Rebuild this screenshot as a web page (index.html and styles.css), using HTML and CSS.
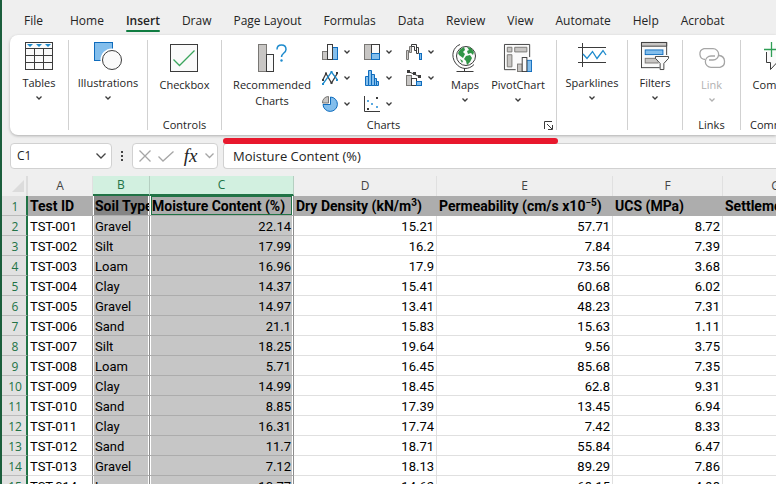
FILE: index.html
```html
<!DOCTYPE html>
<html lang="en">
<head>
<meta charset="utf-8">
<title>Workbook</title>
<link rel="stylesheet" href="styles.css">
</head>
<body>
<div class="app">
  <nav class="tabs">
    <button class="tab tab-file">File</button>
    <button class="tab">Home</button>
    <button class="tab active">Insert</button>
    <button class="tab">Draw</button>
    <button class="tab">Page Layout</button>
    <button class="tab">Formulas</button>
    <button class="tab">Data</button>
    <button class="tab">Review</button>
    <button class="tab">View</button>
    <button class="tab">Automate</button>
    <button class="tab">Help</button>
    <button class="tab">Acrobat</button>
  </nav>

  <section class="ribbon">
    <div class="group g-tables">
      <button class="tile">
        <svg class="icon" width="28" height="28" viewBox="0 0 28 28" fill="none" stroke="#3b3b3b"><rect x=".5" y=".5" width="27" height="27" fill="#fafafa"/><path d="M0 6.500H28M0 13.500H28M0 20.500H28M9.500 6V28M18.500 6V28"/><path d="M2 2h6L5 5zM11 2h6l-3 3zM20 2h6l-3 3z" fill="#1e8bcd" stroke="none"/></svg>
        <span>Tables</span>
        <svg class="chev" width="6" height="4" viewBox="0 0 6 4"><path d="M.5 .5 3 3 5.500 .5"/></svg>
      </button>
    </div>
    <div class="group g-illus">
      <button class="tile">
        <svg class="icon" width="28" height="28" viewBox="0 0 28 28" fill="none"><rect x=".5" y=".5" width="18" height="18" fill="#83beec" stroke="#0f6cbd"/><circle cx="18" cy="18" r="11.500" fill="#fff"/><circle cx="18" cy="18" r="9.500" fill="#fafafa" stroke="#3b3b3b"/></svg>
        <span>Illustrations</span>
        <svg class="chev" width="6" height="4" viewBox="0 0 6 4"><path d="M.5 .5 3 3 5.500 .5"/></svg>
      </button>
    </div>
    <div class="group g-controls low">
      <button class="tile">
        <svg class="icon" width="28" height="28" viewBox="0 0 28 28" fill="none"><rect x=".5" y=".5" width="27" height="27" fill="#fafafa" stroke="#3b3b3b"/><path d="M3.500 15.500 9.500 21.500 24.500 6.500" stroke="#3ba55d" stroke-width="1.300"/></svg>
        <span>Checkbox</span>
      </button>
      <span class="group-name">Controls</span>
    </div>
    <div class="group g-charts low">
      <div class="charts-row">
        <button class="tile rec">
          <svg class="icon" width="28" height="28" viewBox="0 0 28 28" fill="none"><rect x=".5" y=".5" width="8" height="27" fill="#c8c6c4" stroke="#797774"/><rect x="8.500" y="10.500" width="7" height="17" fill="#fafafa" stroke="#3b3b3b"/><path d="M19 5.500C19 2.500 21 1 23.500 1S28 2.600 28 5.500C28 9 23.500 9 23.500 13" stroke="#1e8bcd" stroke-width="1.500"/><circle cx="23.500" cy="16.500" r="1.200" fill="#1e8bcd"/></svg>
          <span>Recommended<br>Charts</span>
        </button>
        <div class="minis">
          <button class="mini" aria-label="Column chart"><svg width="16" height="16" viewBox="0 0 16 16"><rect x=".5" y="7.500" width="5" height="8" fill="#c8c6c4" stroke="#797774"/><rect x="10.500" y="3.500" width="5" height="12" fill="#83beec" stroke="#0f6cbd"/><rect x="5.500" y=".5" width="5" height="15" fill="#fafafa" stroke="#3b3b3b"/></svg><svg class="chev" width="6" height="4" viewBox="0 0 6 4"><path d="M.5 .5 3 3 5.500 .5"/></svg></button>
          <button class="mini" aria-label="Hierarchy chart"><svg width="16" height="16" viewBox="0 0 16 16"><rect x=".5" y=".5" width="7" height="15" fill="#c8c6c4" stroke="#797774"/><rect x="7.500" y=".5" width="8" height="9" fill="#fafafa" stroke="#3b3b3b"/><rect x="7.500" y="9.500" width="8" height="6" fill="#83beec" stroke="#0f6cbd"/></svg><svg class="chev" width="6" height="4" viewBox="0 0 6 4"><path d="M.5 .5 3 3 5.500 .5"/></svg></button>
          <button class="mini" aria-label="Waterfall chart"><svg width="16" height="16" viewBox="0 0 16 16"><path d="M.5 6.500h2v9h-2zM3.500 2.500h2v6h-2z" fill="#c8c6c4" stroke="#797774"/><path d="M5.500 .5h5v6h-2v-4h-3zM10.500 3.500h2v6h-2z" fill="#fafafa" stroke="#3b3b3b"/><rect x="13.500" y="9.500" width="2" height="6" fill="#83beec" stroke="#0f6cbd"/></svg><svg class="chev" width="6" height="4" viewBox="0 0 6 4"><path d="M.5 .5 3 3 5.500 .5"/></svg></button>
          <button class="mini" aria-label="Line chart"><svg width="16" height="16" viewBox="0 0 16 16" fill="none" stroke-width="1.300"><path d="M.5 10.500 4 3.500 9.500 13 15.500 3" stroke="#3b3b3b"/><path d="M.5 14.500 9.500 2 15.500 10" stroke="#1e8bcd"/><path d="M3 2.500h2v2H3zM8.500 12h2v2h-2zM14 2h2v2h-2zM0 9h2v2H0z" fill="#3b3b3b"/><path d="M0 13h2v2H0zM8.500 1h2v2h-2zM14 9h2v2h-2z" fill="#1e8bcd"/></svg><svg class="chev" width="6" height="4" viewBox="0 0 6 4"><path d="M.5 .5 3 3 5.500 .5"/></svg></button>
          <button class="mini" aria-label="Histogram"><svg width="16" height="16" viewBox="0 0 16 16" fill="#83beec" stroke="#0f6cbd"><path d="M1.500 6.500h3v9h-3zM4.500 .5h3v15h-3zM7.500 4.500h3v11h-3zM10.500 8.500h2v7h-2zM12.500 11.500h2v4h-2z"/></svg><svg class="chev" width="6" height="4" viewBox="0 0 6 4"><path d="M.5 .5 3 3 5.500 .5"/></svg></button>
          <button class="mini" aria-label="Combo chart"><svg width="16" height="16" viewBox="0 0 16 16"><rect x=".5" y="5.500" width="5" height="10" fill="#c8c6c4" stroke="#797774"/><rect x="5.500" y="8.500" width="5" height="7" fill="#fafafa" stroke="#3b3b3b"/><rect x="10.500" y="11.500" width="5" height="4" fill="#83beec" stroke="#0f6cbd"/><path d="M2 1.500 8 4 14 7" stroke="#3b3b3b" fill="none"/><path d="M1 0h3v3H1zM7 2h3v3H7zM12 5h3v3h-3z" fill="#3b3b3b"/></svg><svg class="chev" width="6" height="4" viewBox="0 0 6 4"><path d="M.5 .5 3 3 5.500 .5"/></svg></button>
          <button class="mini" aria-label="Pie chart"><svg width="16" height="16" viewBox="0 0 16 16"><path d="M8.500 1A7.200 7.200 0 1 1 1 8.500H8.500z" fill="#83beec" stroke="#0f6cbd"/><path d="M6.500 .5A6 6 0 0 0 .5 7H6.500z" fill="#c8c6c4" stroke="#797774"/></svg><svg class="chev" width="6" height="4" viewBox="0 0 6 4"><path d="M.5 .5 3 3 5.500 .5"/></svg></button>
          <button class="mini" aria-label="Scatter chart"><svg width="16" height="16" viewBox="0 0 16 16"><path d="M.5 0V15.500H16" fill="none" stroke="#3b3b3b"/><path d="M12 1h2v2h-2zM3 12h2v2H3z" fill="#3b3b3b"/><path d="M3 4h2v2H3zM7 7h2v2H7zM12 10h2v2h-2z" fill="#5aa9e0"/></svg><svg class="chev" width="6" height="4" viewBox="0 0 6 4"><path d="M.5 .5 3 3 5.500 .5"/></svg></button>
        </div>
        <button class="tile maps">
          <svg class="icon" width="26" height="28" viewBox="0 0 26 28" fill="none"><circle cx="14" cy="12" r="9.500" fill="#fafafa" stroke="#3b3b3b"/><path d="M8 5.500 12 3l1 3-2 2 2 2-2 4-4-3-1-2zM15 3l4 1 3 4-1 3-2-2-3 1-1-3 2-1zM14 12l4-1 2 3-2 4-3 3-1-4-2-2zM8 15l3 2-1 2z" fill="#2f9445"/><path d="M8 0.500C1 3 -1.500 12 3.500 19S17 26 22 20.500M12.500 24v3.500M4.500 27.500h17" stroke="#3b3b3b"/></svg>
          <span>Maps</span>
          <svg class="chev" width="6" height="4" viewBox="0 0 6 4"><path d="M.5 .5 3 3 5.500 .5"/></svg>
        </button>
        <button class="tile pivot">
          <svg class="icon" width="30" height="30" viewBox="0 0 30 30"><path d="M12.500 27.500H.5V.5H27.500V14" fill="#fafafa" stroke="#3b3b3b"/><path d="M3.500 3.500h5v5h-5zM11.500 3.500h13v5h-13zM3.500 11.500h5v13h-5z" fill="#c8c6c4" stroke="#797774"/><rect x="14.500" y="21.500" width="5" height="8" fill="#c8c6c4" stroke="#797774"/><rect x="24.500" y="17.500" width="5" height="12" fill="#83beec" stroke="#0f6cbd"/><rect x="19.500" y="14.500" width="5" height="15" fill="#fafafa" stroke="#3b3b3b"/></svg>
          <span>PivotChart</span>
          <svg class="chev" width="6" height="4" viewBox="0 0 6 4"><path d="M.5 .5 3 3 5.500 .5"/></svg>
        </button>
      </div>
      <div class="group-foot"><span></span><span class="group-name">Charts</span>
        <button class="launch" aria-label="Chart options"><svg width="9" height="9" viewBox="0 0 9 9" fill="none" stroke="#3b3b3b"><path d="M.5 8V.5H8M3 3l5 5M8.500 4v4.500H4"/></svg></button>
      </div>
    </div>
    <div class="group g-spark">
      <button class="tile">
        <svg class="icon" width="28" height="28" viewBox="0 0 28 28" fill="none"><path d="M0 5.500H28M0 20.500H28M4.500 1V25" stroke="#3b3b3b"/><path d="M5 12 9 16.500 14.500 9.500 19 16.500 25 8.500 28 13" stroke="#1e8bcd" stroke-width="1.300"/></svg>
        <span>Sparklines</span>
        <svg class="chev" width="6" height="4" viewBox="0 0 6 4"><path d="M.5 .5 3 3 5.500 .5"/></svg>
      </button>
    </div>
    <div class="group g-filters">
      <button class="tile">
        <svg class="icon" width="30" height="30" viewBox="0 0 30 30"><rect x=".5" y=".5" width="27" height="27" fill="#fafafa" stroke="#3b3b3b"/><path d="M.5 .5h27v4H.5z" fill="#c8c6c4" stroke="#3b3b3b"/><rect x="4.500" y="8.500" width="19" height="5" fill="#83beec" stroke="#0f6cbd"/><rect x="4.500" y="17.500" width="14" height="5" fill="#c8c6c4" stroke="#797774"/><path d="M14 14H31V30H20V24z" fill="#fff"/><path d="M15.500 15.500h14v2L24.500 23v6.500h-4V23L15.500 17.500z" fill="#fafafa" stroke="#3b3b3b"/></svg>
        <span>Filters</span>
        <svg class="chev" width="6" height="4" viewBox="0 0 6 4"><path d="M.5 .5 3 3 5.500 .5"/></svg>
      </button>
    </div>
    <div class="group g-links low">
      <button class="tile disabled" disabled>
        <svg class="icon" width="28" height="28" viewBox="0 0 28 28" fill="none" stroke="#a6a6a6" stroke-width="1.300"><path d="M7 15.500A5.500 5.500 0 0 1 6 4.700h9A5.500 5.500 0 0 1 15 16h-4"/><path d="M21 11.500A6 6 0 0 1 22 23.300h-9A5.500 5.500 0 0 1 13 12h4"/></svg>
        <span>Link</span>
        <svg class="chev" width="6" height="4" viewBox="0 0 6 4"><path d="M.5 .5 3 3 5.500 .5"/></svg>
      </button>
      <span class="group-name">Links</span>
    </div>
    <div class="group g-comments low">
      <button class="tile">
        <svg class="icon" width="28" height="28" viewBox="0 0 28 28" fill="none"><path d="M12 1.500H27.500V18.500H13L6.500 25.500V18.500H2.500V8" fill="#fafafa" stroke="#3b3b3b"/><path d="M7.500 -2V13M0 5.500H14" stroke="#2f9e56" stroke-width="1.300"/></svg>
        <span>Comment</span>
      </button>
      <span class="group-name">Comments</span>
    </div>
  </section>

  <div class="formula-bar">
    <label class="name-box"><input type="text" value="C1" aria-label="Name box"><svg width="10" height="6" viewBox="0 0 10 6" fill="none" stroke="#444" stroke-width="1.300"><path d="M.5 .5 5 5 9.500 .5"/></svg></label>
    <svg class="dots" width="4" height="12" viewBox="0 0 4 12" fill="#444"><path d="M1 1h2v2H1zM1 5h2v2H1zM1 9h2v2H1z"/></svg>
    <div class="fx-box">
      <svg width="12" height="12" viewBox="0 0 12 12"><path d="M.5 .5 11.500 11.500M11.500 .5.5 11.500"/></svg>
      <svg width="16" height="11" viewBox="0 0 16 11"><path d="M.5 5.500 5 10 15.500 .5"/></svg>
      <button class="fx" aria-label="Insert function"><i>fx</i></button>
      <svg width="9" height="6" viewBox="0 0 9 6"><path d="M.5 .5 4.500 4.500 8.500 .5"/></svg>
    </div>
    <input class="formula" type="text" value="Moisture Content (%)" aria-label="Formula">
    <div class="marker"></div>
  </div>

  <table class="sheet">
    <colgroup><col class="c-n"><col class="c-a"><col class="c-b"><col class="c-c"><col class="c-d"><col class="c-e"><col class="c-f"><col class="c-g"></colgroup>
    <thead><tr><th class="corner"><svg width="12" height="12" viewBox="0 0 12 12"><path d="M12 0V12H0z" fill="#dcdcdc"/></svg></th><th>A</th><th class="on">B</th><th class="on">C</th><th>D</th><th>E</th><th>F</th><th>G</th></tr></thead>
    <tbody>
      <tr class="titles"><th>1</th><td>Test ID</td><td>Soil Type</td><td>Moisture Content (%)</td><td>Dry Density (kN/m<sup>3</sup>)</td><td>Permeability (cm/s x10<sup>−5</sup>)</td><td>UCS (MPa)</td><td>Settlement (mm)</td></tr>
      <tr><th>2</th><td>TST-001</td><td>Gravel</td><td>22.14</td><td>15.21</td><td>57.71</td><td>8.72</td><td></td></tr>
      <tr><th>3</th><td>TST-002</td><td>Silt</td><td>17.99</td><td>16.2</td><td>7.84</td><td>7.39</td><td></td></tr>
      <tr><th>4</th><td>TST-003</td><td>Loam</td><td>16.96</td><td>17.9</td><td>73.56</td><td>3.68</td><td></td></tr>
      <tr><th>5</th><td>TST-004</td><td>Clay</td><td>14.37</td><td>15.41</td><td>60.68</td><td>6.02</td><td></td></tr>
      <tr><th>6</th><td>TST-005</td><td>Gravel</td><td>14.97</td><td>13.41</td><td>48.23</td><td>7.31</td><td></td></tr>
      <tr><th>7</th><td>TST-006</td><td>Sand</td><td>21.1</td><td>15.83</td><td>15.63</td><td>1.11</td><td></td></tr>
      <tr><th>8</th><td>TST-007</td><td>Silt</td><td>18.25</td><td>19.64</td><td>9.56</td><td>3.75</td><td></td></tr>
      <tr><th>9</th><td>TST-008</td><td>Loam</td><td>5.71</td><td>16.45</td><td>85.68</td><td>7.35</td><td></td></tr>
      <tr><th>10</th><td>TST-009</td><td>Clay</td><td>14.99</td><td>18.45</td><td>62.8</td><td>9.31</td><td></td></tr>
      <tr><th>11</th><td>TST-010</td><td>Sand</td><td>8.85</td><td>17.39</td><td>13.45</td><td>6.94</td><td></td></tr>
      <tr><th>12</th><td>TST-011</td><td>Clay</td><td>16.31</td><td>17.74</td><td>7.42</td><td>8.33</td><td></td></tr>
      <tr><th>13</th><td>TST-012</td><td>Sand</td><td>11.7</td><td>18.71</td><td>55.84</td><td>6.47</td><td></td></tr>
      <tr><th>14</th><td>TST-013</td><td>Gravel</td><td>7.12</td><td>18.13</td><td>89.29</td><td>7.86</td><td></td></tr>
      <tr><th>15</th><td>TST-014</td><td>Loam</td><td>10.77</td><td>14.62</td><td>68.15</td><td>4.98</td><td></td></tr>
    </tbody>
  </table>
</div>
</body>
</html>
```
FILE: styles.css
```css
* { box-sizing: border-box; }
body {
  margin: 0;
  height: 100vh;
  overflow: hidden;
  background: #efefef;
  color: #242424;
  font: 12px/16px "Open Sans", "Noto Sans", sans-serif;
}
button, input { font: inherit; color: inherit; background: none; border: 0; padding: 0; margin: 0; }
.app { min-height: 100vh; border-left: 2px solid #1b5e3c; overflow: hidden; }

.tabs { display: flex; padding: 9px 0 2px 5px; }
.tab { flex: none; height: 24px; padding: 0 11px; white-space: nowrap; }
.tab-file { padding: 0 16px 0 17px; }
.tab.active { font-weight: 600; position: relative; }
.tab.active::after { content: ""; position: absolute; left: 11px; right: 11px; bottom: 1px; height: 2px; background: #107c41; border-radius: 1px; }

.ribbon {
  display: flex;
  margin: 0 0 0 8px;
  height: 100px;
  background: #fff;
  border-radius: 8px 0 0 8px;
  box-shadow: 0 1px 3px #0004;
  padding: 5px 0;
  overflow: hidden;
  font-size: 11px;
}
.group { flex: none; display: flex; flex-direction: column; align-items: center; border-right: 1px solid #d1d1d1; padding-top: 2px; }
.group.low { padding-top: 4px; }
.g-tables { width: 59px; }
.g-illus { width: 79px; }
.g-controls { width: 74px; }
.g-charts { width: 335px; }
.g-spark { width: 71px; }
.g-filters { width: 55px; }
.g-links { width: 58px; }
.g-comments { width: 74px; border-right: 0; }
.tile { display: flex; flex-direction: column; align-items: center; white-space: nowrap; }
.icon { height: 28px; margin-bottom: 5px; overflow: visible; }
.chev { fill: none; stroke: #3b3b3b; stroke-width: 1.3; }
.tile .chev { margin-top: 5px; }
.group-name { margin-top: auto; line-height: 10px; }
.disabled { color: #b1b1b1; }
.disabled .chev { stroke: #b1b1b1; }
.charts-row { display: flex; width: 100%; padding-left: 10px; align-items: flex-start; }
.rec { width: 80px; }
.minis { display: grid; grid-template-columns: repeat(3, 42px); grid-auto-rows: 16px; row-gap: 10px; margin-left: 10px; }
.mini { display: flex; gap: 6px; align-items: center; height: 16px; }
.maps { width: 30px; margin-left: 2px; }
.pivot { width: 56px; margin-left: 10px; }
.group-foot { display: grid; grid-template-columns: 1fr auto 1fr; align-items: end; width: 100%; margin-top: auto; padding-right: 3px; }
.group-foot .group-name { padding-right: 8px; }
.launch { justify-self: end; height: 9px; width: 9px; line-height: 0; }
.launch svg { display: block; }

.formula-bar { display: flex; position: relative; align-items: center; margin: 8px 0 7px 8px; height: 26px; }
.name-box, .fx-box, .formula { height: 26px; background: #fff; border: 1px solid #d1d1d1; border-radius: 4px; }
.name-box { display: flex; width: 102px; align-items: center; padding: 0 5px 0 6px; }
.name-box input { flex: 1; min-width: 0; }
.dots { margin: 0 8px; }
.fx-box { display: flex; align-items: center; justify-content: space-between; width: 86px; padding: 0 3px 0 6px; }
.fx-box svg { fill: none; stroke: #a6a6a6; stroke-width: 1.300; }
.fx { font: 19px/20px "Liberation Serif", serif; padding-left: 2px; }
.formula { flex: 1; min-width: 0; margin-left: 5px; padding-left: 9px; border-right: 0; border-radius: 4px 0 0 4px; font-size: 13px; }
.marker { position: absolute; left: 213px; top: -5px; width: 335px; height: 6px; border-radius: 3px; background: #e8182d; }

.sheet { table-layout: fixed; border-collapse: separate; border-spacing: 0; width: 827px; color: #000; font: 13px/17px Roboto, sans-serif; }
.c-n { width: 26px; }
.c-a { width: 65px; }
.c-b { width: 57px; }
.c-c { width: 144px; }
.c-d { width: 143px; }
.c-e { width: 176px; }
.c-f { width: 110px; }
.c-g { width: 106px; }
.sheet th, .sheet td { height: 20px; padding: 2px 2px 0; overflow: hidden; white-space: nowrap; border: 0 solid #e0e0e0; border-width: 0 1px 1px 0; }
.sheet thead th { font: 12px/18px "Open Sans", sans-serif; color: #444; border-bottom-width: 0; padding-top: 0; }
.sheet thead .corner { text-align: right; border-right: 2px solid #ddd; line-height: 0; }
.sheet thead .on { background: #d2f0e0; color: #217346; border-bottom: 2px solid #217346; border-right-color: #b5cfc1; }
.sheet tbody th { font: 12px/17px "Open Sans", sans-serif; color: #217346; background: #e1e1e1; text-align: center; border-right: 2px solid #217346; border-bottom-color: #bbb; padding-right: 0; }
.sheet td { background: #fff; text-align: right; }
.sheet td:nth-child(2), .sheet td:nth-child(3) { text-align: left; }
.sheet td:nth-child(3), .sheet td:nth-child(4) { background: #c6c6c6; border-color: #8c8c8c; border-bottom-color: #acacac; box-shadow: inset 1px 0 #fff, inset -1px 0 #fff; }
.sheet td:nth-child(2) { border-right-color: #8c8c8c; }
.sheet .titles td { font-size: 14px; font-weight: 700; background: #adadad; text-align: left; border-color: #adadad; }
.sheet .titles td:nth-child(3) { background: #858585; }
.sheet .titles td:nth-child(4) { border-right-color: #8c8c8c; box-shadow: inset 1px 0 #fff, inset -1px 0 #fff, inset 2px 0 #217346, inset -2px 0 #217346, inset 0 1px #217346, inset 0 -1px #217346; }
sup { font-size: 10px; line-height: 0; vertical-align: 5px; }
```
